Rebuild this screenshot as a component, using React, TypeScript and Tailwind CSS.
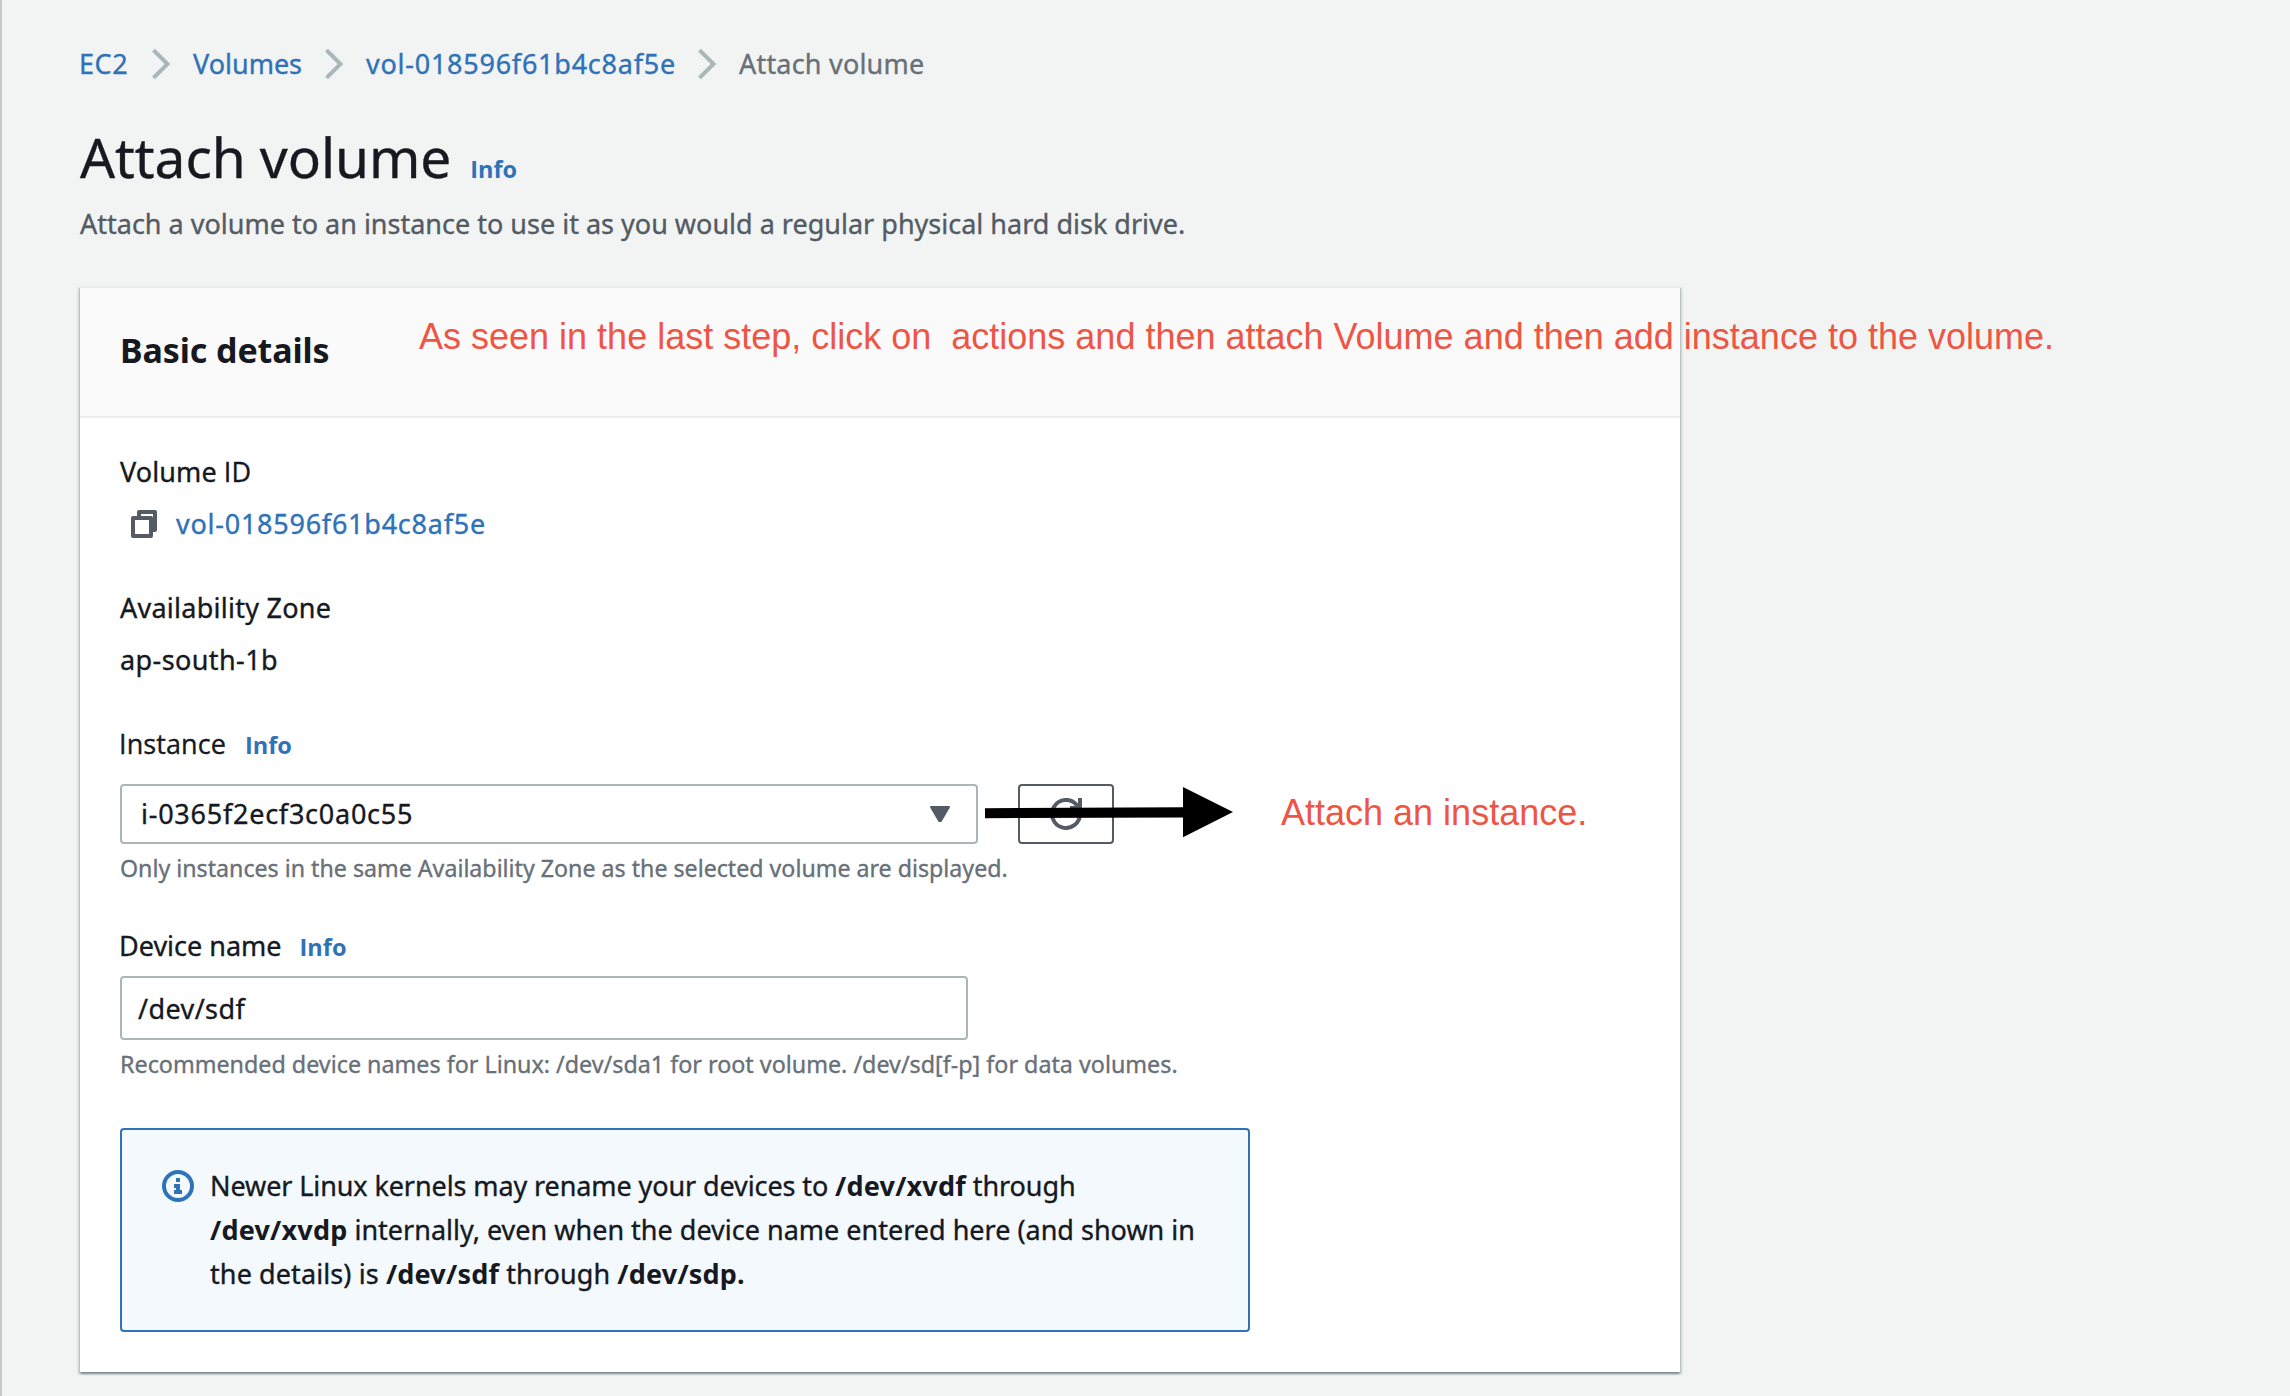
import type { ReactNode } from "react";

function Chevron() {
  return (
    <svg className="h-8 w-5 shrink-0" viewBox="0 0 20 32" fill="none" stroke="#aab7b8" strokeWidth="4">
      <path d="M2.5 2.2 16.5 16 2.5 29.8" />
    </svg>
  );
}

function CopyIcon() {
  return (
    <svg className="h-8 w-8 shrink-0" viewBox="0 0 32 32" fill="none" stroke="#545b64" strokeWidth="4" strokeLinejoin="round">
      <path d="M4 10h18v18H4z" />
      <path d="M10 10V4h16v18h-4" />
    </svg>
  );
}

function InfoIcon() {
  return (
    <svg className="h-8 w-8 shrink-0" viewBox="0 0 32 32">
      <circle cx="16" cy="16" r="14" fill="none" stroke="#2f72b8" strokeWidth="4" />
      <path fill="#2f72b8" d="M14 8h4v4h-4zM12 14h6v6h2v4h-8v-4h2v-2h-2z" />
    </svg>
  );
}

function RefreshIcon() {
  return (
    <svg className="h-8 w-8 shrink-0" viewBox="0 0 32 32" fill="none" stroke="#545b64" strokeWidth="4">
      <path d="M30 16A14 14 0 1 1 26.500 6.700L28.500 9.500" />
      <path d="M30 0v10H20" />
    </svg>
  );
}

function Caret() {
  return (
    <svg className="h-5 w-6 shrink-0" viewBox="0 0 24 20">
      <path d="M3 3h18l-8.200 14h-1.600z" fill="#545b64" stroke="#545b64" strokeWidth="2" strokeLinejoin="round" />
    </svg>
  );
}

function PointerArrow() {
  return (
    <svg className="absolute top-0 left-[864px] h-[60px] w-[252px]" viewBox="0 0 252 60">
      <path d="M1 24.200 199 23.200V3l50 25-50 25.300V33.600L1 34.200z" fill="#000" />
    </svg>
  );
}

function InfoLink() {
  return (
    <a className="font-['Open_Sans',sans-serif] text-[23.5px] font-bold text-[#2f72b8] [-webkit-text-stroke:0]">Info</a>
  );
}

function Strong({ children }: { children: ReactNode }) {
  return <b className="tracking-[0.2px] [-webkit-text-stroke:0]">{children}</b>;
}

function Label({ children }: { children: ReactNode }) {
  return <div className="flex h-11 items-baseline">{children}</div>;
}

export default function App() {
  return (
    <div className="min-h-[1396px] w-full overflow-hidden border-l-2 border-[#c6cacd] bg-[#f2f4f3] pt-[42px] pl-[78px] font-['Noto_Sans',sans-serif] text-[27px] leading-[44px] whitespace-nowrap text-[#16191f] [-webkit-text-stroke:0.35px]">
      <nav className="flex h-11 items-center gap-[22px] text-[#2f72b8]">
        <a className="w-[49px] -ml-px mr-px tracking-[0.6px]">EC2</a>
        <Chevron />
        <a className="w-[109px]">Volumes</a>
        <Chevron />
        <a className="w-[309px] tracking-[0.75px]">vol-018596f61b4c8af5e</a>
        <Chevron />
        <span className="tracking-[0.2px] text-[#687078]">Attach volume</span>
      </nav>

      <header>
        <h1 className="mt-[38px] flex h-[66px] items-baseline gap-[19px] text-[55px] leading-[66px]">
          <span className="tracking-[-0.08px]">Attach volume</span>
          <InfoLink />
        </h1>
        <p className="mt-3 h-11 text-[#545b64]">
          Attach a volume to an instance to use it as you would a regular physical hard disk drive.
        </p>
      </header>

      <section className="relative mt-10 w-[1600px] bg-white shadow-[0_2px_2px_rgba(0,28,36,0.3),2px_2px_2px_rgba(0,28,36,0.15),-2px_2px_2px_rgba(0,28,36,0.15)]">
        <div className="h-[132px] border-y-2 border-[#eaeded] bg-[#fafafa] px-10 pt-10">
          <h2 className="text-[34px] font-bold tracking-[-0.1px] [-webkit-text-stroke:0]">Basic details</h2>
        </div>
        <p className="absolute top-[29px] left-[339px] font-['Liberation_Sans',sans-serif] text-[36px] whitespace-pre text-[#ee5544] [-webkit-text-stroke:0]">
          {"As seen in the last step, click on  actions and then attach Volume and then add instance to the volume."}
        </p>

        <div className="px-10 pt-8 pb-10">
          <div className="tracking-[0.1px] whitespace-pre">
            Volume <span className="font-['Open_Sans',sans-serif]">ID</span>
          </div>
          <div className="mt-2 flex h-11 items-center gap-[15px] pl-[9px]">
            <CopyIcon />
            <a className="tracking-[0.75px] text-[#2f72b8]">vol-018596f61b4c8af5e</a>
          </div>

          <div className="mt-10 tracking-[0.25px]">Availability Zone</div>
          <div className="mt-2 tracking-[0.4px]">ap-south-1b</div>

          <div className="mt-10">
            <Label>
              <span className="mr-[19px] -ml-px tracking-[0.1px] font-['Open_Sans',sans-serif]">Instance</span>
              <InfoLink />
            </Label>
          </div>
          <div className="relative mt-[18px] flex h-[60px] gap-10">
            <div className="flex w-[858px] items-center justify-between rounded-[4px] border-2 border-[#aab7b8] pr-[24px] pl-[19px]">
              <span className="tracking-[0.75px]">i-0365f2ecf3c0a0c55</span>
              <Caret />
            </div>
            <button className="flex w-24 items-center justify-center rounded-[4px] border-2 border-[#545b64]">
              <RefreshIcon />
            </button>
            <PointerArrow />
            <p className="absolute top-[7px] left-[1161px] font-['Liberation_Sans',sans-serif] text-[36px] text-[#ee5544] [-webkit-text-stroke:0]">
              Attach an instance.
            </p>
          </div>
          <p className="mt-1 text-[23.2px] leading-10 text-[#687078]">
            Only instances in the same Availability Zone as the selected volume are displayed.
          </p>

          <div className="mt-9">
            <Label>
              <span className="mr-[18px] -ml-px">Device name</span>
              <InfoLink />
            </Label>
          </div>
          <div className="mt-2 flex h-16 w-[848px] items-center rounded-[4px] border-2 border-[#aab7b8] pt-px pl-4">
            <span className="tracking-[0.4px]">/dev/sdf</span>
          </div>
          <p className="mt-1 text-[23.3px] leading-10 text-[#687078]">
            Recommended device names for Linux: /dev/sda1 for root volume. /dev/sd[f-p] for data volumes.
          </p>

          <div className="mt-11 flex h-[204px] w-[1130px] gap-4 rounded-[4px] border-2 border-[#2f72b8] bg-[#f3f9fd] pt-[34px] pl-10">
            <div className="pt-1.5">
              <InfoIcon />
            </div>
            <div>
              <div className="tracking-[-0.1px]">
                Newer Linux kernels may rename your devices to <Strong>/dev/xvdf</Strong> through
              </div>
              <div>
                <Strong>/dev/xvdp</Strong> internally, even when the device name entered here (and shown in
              </div>
              <div className="tracking-[0.1px]">
                the details) is <Strong>/dev/sdf</Strong> through <Strong>/dev/sdp.</Strong>
              </div>
            </div>
          </div>
        </div>
      </section>
    </div>
  );
}
